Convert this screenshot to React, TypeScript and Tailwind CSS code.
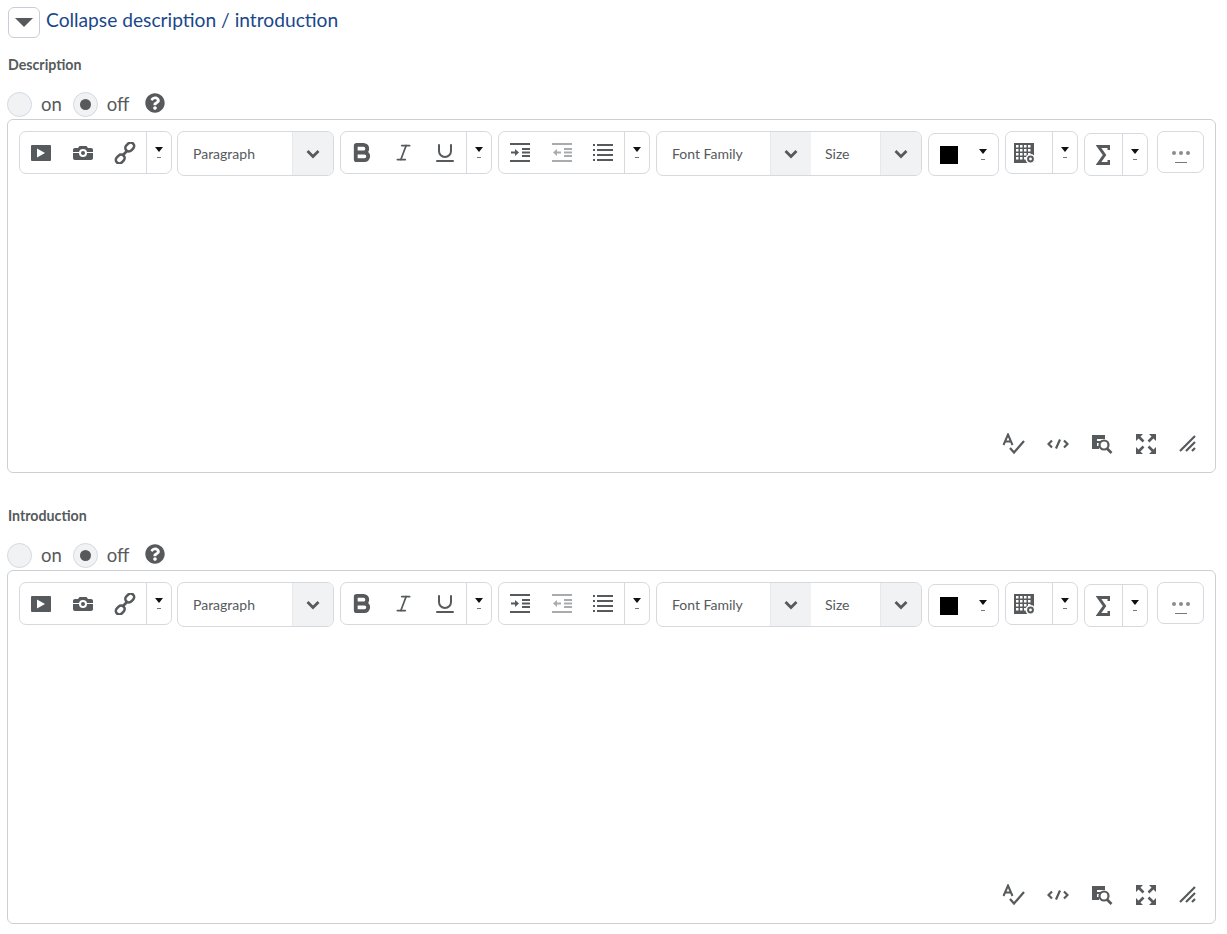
import { Fragment, type ReactNode } from "react";
import { Bold, Italic, Underline } from "lucide-react";
import { FaQuestionCircle } from "react-icons/fa";

const ink = "#565a5c";

function Caret() {
  return (
    <svg width="10" height="16" viewBox="0 0 10 16">
      <path d="M1 2h8L5 7z" fill="#111" />
      <rect x="3" y="12" width="4" height="1" fill="#777" />
    </svg>
  );
}

function Chevron() {
  return (
    <svg width="14" height="10" viewBox="0 0 14 10">
      <path d="M1.500 2 7 7.500 12.500 2" fill="none" stroke={ink} strokeWidth="2.800" />
    </svg>
  );
}

function Video() {
  return (
    <svg width="22" height="18" viewBox="0 0 22 18">
      <rect x="1" y="1" width="20" height="16" rx="1" fill={ink} />
      <path d="M7 4.500v9l8-4.500z" fill="#fff" />
    </svg>
  );
}

function Camera() {
  return (
    <svg width="22" height="16" viewBox="0 0 22 16">
      <path d="M1 5c0-1.200.8-2 2-2h3l1.500-2h7L16 3h3c1.200 0 2 .8 2 2v8c0 1.200-.8 2-2 2H3c-1.200 0-2-.8-2-2z" fill={ink} />
      <rect x="1" y="7" width="20" height="1" fill="#fff" />
      <circle cx="11" cy="8" r="4" fill="#fff" />
      <circle cx="11" cy="8" r="2" fill={ink} />
    </svg>
  );
}

function Chain() {
  return (
    <svg width="22" height="22" viewBox="0 0 22 22" fill="none" stroke={ink} strokeWidth="2.600">
      <rect x="11" y="1.500" width="9.500" height="7" rx="3.500" transform="rotate(-45 15.750 5)" />
      <rect x="1.500" y="13.500" width="9.500" height="7" rx="3.500" transform="rotate(-45 6.250 17)" />
      <path d="M9 13l4-4" />
    </svg>
  );
}

function Indent({ dir, color }: { dir: "in" | "out"; color: string }) {
  return (
    <svg width="20" height="19" viewBox="0 0 20 19" fill={color}>
      <rect width="20" height="2" y="0" />
      <rect width="20" height="2" y="17" />
      <rect x="12" width="8" height="2" y="5" />
      <rect x="12" width="8" height="2" y="8.500" />
      <rect x="12" width="8" height="2" y="12" />
      {dir === "in" ? <path d="M1 8.500h4V6l4 3.500-4 3.500v-2.500H1z" /> : <path d="M9 8.500H5V6L1 9.500 5 13v-2.500h4z" />}
    </svg>
  );
}

function List() {
  return (
    <svg width="20" height="19" viewBox="0 0 20 19" fill={ink}>
      {[1, 6, 11, 16].map((y) => (
        <Fragment key={y}>
          <rect x="0" y={y} width="2" height="2" />
          <rect x="4" y={y} width="16" height="2" />
        </Fragment>
      ))}
    </svg>
  );
}

function TableIcon() {
  return (
    <svg width="22" height="22" viewBox="0 0 22 22">
      <rect x="0" y="1" width="20" height="20" fill={ink} />
      {[2, 6, 10, 14].map((x) =>
        [3, 7, 11, 15].map((y) => <rect key={`${x}-${y}`} x={x} y={y} width="2.500" height="2.500" fill="#fff" />),
      )}
      <circle cx="16.500" cy="17" r="5" fill="#fff" />
      <circle cx="16.500" cy="17" r="2.400" fill="none" stroke={ink} strokeWidth="2" />
    </svg>
  );
}

function SigmaIcon() {
  return (
    <svg width="14" height="22" viewBox="0 0 14 22">
      <path d="M13 6V2.500H2.500l6 8.500-6 8.500H13V16" fill="none" stroke={ink} strokeWidth="3" />
    </svg>
  );
}

function Spell() {
  return (
    <svg width="24" height="22" viewBox="0 0 24 22" fill="none" stroke={ink}>
      <path d="M1.500 12 6 1.500 10.500 12M3 8.500h6" strokeWidth="2" />
      <path d="M8 15l4 4.500L22 8" strokeWidth="2.200" />
    </svg>
  );
}

function Code() {
  return (
    <svg width="22" height="12" viewBox="0 0 22 12" fill="none" stroke={ink} strokeWidth="2.200">
      <path d="M5 2.500 1.500 6 5 9.500M17 2.500 20.500 6 17 9.500M13 1.500 9 10.500" />
    </svg>
  );
}

function Preview() {
  return (
    <svg width="22" height="20" viewBox="0 0 22 20">
      <path d="M1 1h13v4H6v2h4v2H6v3h2v3H1z" fill={ink} />
      <circle cx="13" cy="11" r="4.500" fill="#fff" stroke={ink} strokeWidth="2.200" />
      <path d="M16 14.500l4.500 4.500" stroke={ink} strokeWidth="2.600" />
    </svg>
  );
}

function Fullscreen() {
  return (
    <svg width="20" height="20" viewBox="0 0 20 20" fill={ink} stroke={ink}>
      <path d="M0 0h7L0 7zM20 0h-7l7 7zM0 20h7l-7-7zM20 20h-7l7-7z" strokeWidth="0" />
      <path d="M3 3l4.500 4.500M17 3l-4.500 4.500M3 17l4.500-4.500M17 17l-4.500-4.500" strokeWidth="2.600" />
    </svg>
  );
}

function Resize() {
  return (
    <svg width="18" height="18" viewBox="0 0 18 18" fill="none" stroke={ink} strokeWidth="2.200">
      <path d="M1 16 16 1M7 16l9-9M13 16l3-3" />
    </svg>
  );
}

function Group({ width, className, children }: { width: string; className?: string; children: ReactNode }) {
  return (
    <div className={`flex shrink-0 overflow-hidden rounded-[7px] border border-[#d6d9dd] bg-white ${width} ${className ?? ""}`}>
      {children}
    </div>
  );
}

function Btn({ children }: { children: ReactNode }) {
  return <div className="flex h-[41px] w-[42px] items-center justify-center">{children}</div>;
}

function Split({ width = "w-[25px]" }: { width?: string }) {
  return (
    <div className={`flex h-[41px] items-center justify-center border-l border-[#d6d9dd] ${width}`}>
      <Caret />
    </div>
  );
}

function SelectBox({ label, textWidth, inset = "pl-[15px]" }: { label: string; textWidth: string; inset?: string }) {
  return (
    <>
      <div className={`flex h-full items-center text-[14px] text-[#565a5c] ${inset} ${textWidth}`}>{label}</div>
      <div className="flex h-full w-[41px] items-center justify-center border-l border-[#e6e8eb] bg-[#f1f2f4]">
        <Chevron />
      </div>
    </>
  );
}

function Toolbar() {
  return (
    <div className="flex items-start pl-[11px] pt-[11px]">
      <Group width="w-[153px]">
        <Btn><Video /></Btn>
        <Btn><Camera /></Btn>
        <Btn><Chain /></Btn>
        <Split />
      </Group>
      <Group width="w-[157px] h-[45px]" className="ml-[5px]">
        <SelectBox label="Paragraph" textWidth="w-[114px]" />
      </Group>
      <Group width="w-[152px]" className="ml-[6px]">
        <Btn><Bold size={23} color={ink} strokeWidth={4} /></Btn>
        <Btn><Italic size={21} color={ink} strokeWidth={2} /></Btn>
        <Btn><Underline size={24} color={ink} strokeWidth={2} /></Btn>
        <Split />
      </Group>
      <Group width="w-[152px]" className="ml-[6px]">
        <Btn><Indent dir="in" color={ink} /></Btn>
        <Btn><Indent dir="out" color="#a9acae" /></Btn>
        <Btn><List /></Btn>
        <Split />
      </Group>
      <Group width="w-[266px] h-[45px]" className="ml-[6px]">
        <SelectBox label="Font Family" textWidth="w-[113px]" />
        <SelectBox label="Size" textWidth="w-[69px]" inset="pl-[14px]" />
      </Group>
      <Group width="w-[71px] h-[43px]" className="ml-[6px] mt-[2px] items-center">
        <div className="ml-[11px] h-[18px] w-[18px] bg-black" />
        <div className="ml-[20px]"><Caret /></div>
      </Group>
      <Group width="w-[73px]" className="ml-[6px]">
        <div className="flex h-[41px] w-[46px] items-center justify-center pr-[8px]"><TableIcon /></div>
        <Split />
      </Group>
      <Group width="w-[64px] h-[43px]" className="ml-[6px] mt-[2px]">
        <div className="flex h-[41px] w-[37px] items-center justify-center pr-[1px]"><SigmaIcon /></div>
        <Split />
      </Group>
      <Group width="w-[47px] h-[42px]" className="ml-[9px]">
        <div className="flex h-full w-full flex-col items-center justify-center gap-[7px] pt-[10px]">
          <div className="flex gap-[3px]">
            <span className="h-[4px] w-[4px] rounded-full bg-[#8a8d90]" />
            <span className="h-[4px] w-[4px] rounded-full bg-[#8a8d90]" />
            <span className="h-[4px] w-[4px] rounded-full bg-[#8a8d90]" />
          </div>
          <span className="h-px w-[12px] bg-[#777]" />
        </div>
      </Group>
    </div>
  );
}

function Editor() {
  return (
    <div className="flex h-[354px] w-[1209px] flex-col justify-between rounded-[6px] border border-[#cdd0d3] bg-white">
      <Toolbar />
      <div className="flex items-center justify-end pb-[17px] pr-[15px]">
        <div className="flex w-[24px] justify-center"><Spell /></div>
        <div className="ml-[20px] flex w-[24px] justify-center"><Code /></div>
        <div className="ml-[20px] flex w-[24px] justify-center"><Preview /></div>
        <div className="ml-[20px] flex w-[24px] justify-center"><Fullscreen /></div>
        <div className="ml-[18px] flex w-[24px] justify-center"><Resize /></div>
      </div>
    </div>
  );
}

function Radio({ checked }: { checked?: boolean }) {
  return (
    <span className="flex h-[25px] w-[25px] items-center justify-center rounded-full border border-[#d3d9e3] bg-[#f1f2f4]">
      {checked && <span className="h-[11px] w-[11px] rounded-full bg-[#565a5c]" />}
    </span>
  );
}

function Field({ label }: { label: string }) {
  return (
    <section>
      <h3 className="pl-[8px] text-[14.2px] font-bold leading-[20px] text-[#565a5c]">{label}</h3>
      <div className="mt-[17px] flex h-[25px] items-center pl-[7px] text-[18.5px] text-[#565a5c]">
        <Radio />
        <span className="ml-[9px]">on</span>
        <span className="ml-[11px]"><Radio checked /></span>
        <span className="ml-[9px]">off</span>
        <FaQuestionCircle className="ml-[16px] -mt-[3px]" size={20} color="#565a5c" />
      </div>
      <div className="mt-[2px] pl-[7px]">
        <Editor />
      </div>
    </section>
  );
}

export default function App() {
  return (
    <div className="h-[934px] w-[1227px] overflow-hidden bg-white pt-[7px] font-['Lato',sans-serif]">
      <div className="flex items-center pl-[8px]">
        <button className="flex h-[31px] w-[32px] items-center justify-center rounded-[6px] border border-[#c8ced8] bg-white">
          <svg width="20" height="11" viewBox="0 0 20 11">
            <path d="M1 1h18l-9 9z" fill="#565a5c" />
          </svg>
        </button>
        <a className="ml-[6px] -mt-[4px] text-[19.2px] text-[#19478a]">Collapse description / introduction</a>
      </div>
      <div className="mt-[17px]">
        <Field label="Description" />
      </div>
      <div className="mt-[33px]">
        <Field label="Introduction" />
      </div>
    </div>
  );
}
